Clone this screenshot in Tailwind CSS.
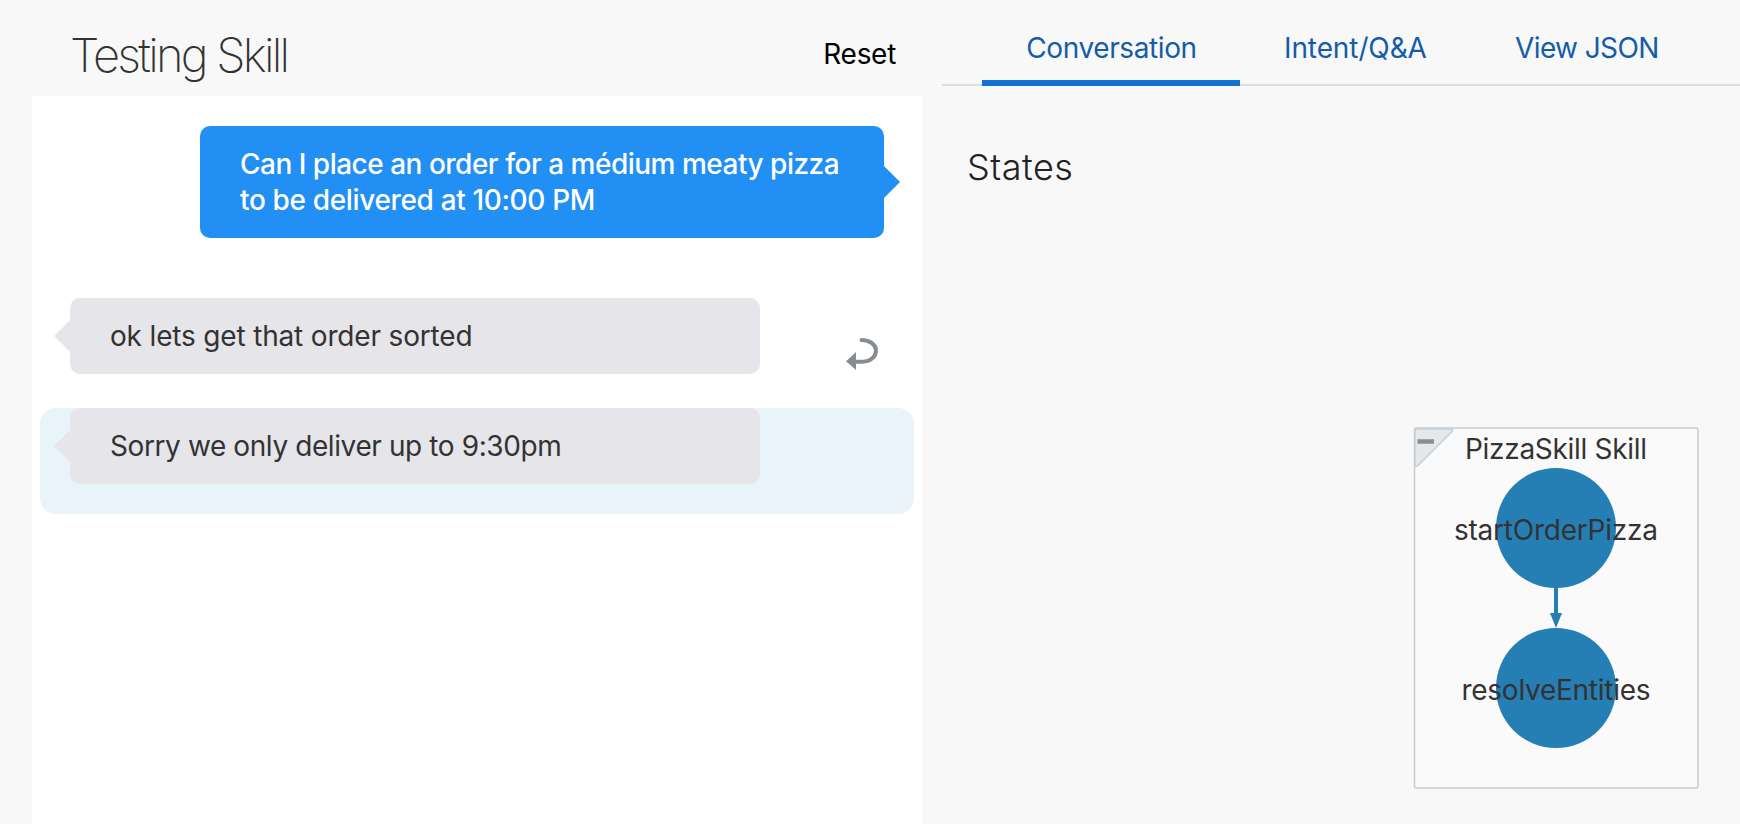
<!DOCTYPE html>
<html lang="en">
<head>
<meta charset="utf-8">
<title>Testing Skill</title>
<script src="https://cdn.jsdelivr.net/npm/@tailwindcss/browser@4"></script>
</head>
<body class="flex h-screen overflow-hidden bg-[#f8f8f8] pl-8 font-[Inter,'Liberation_Sans',sans-serif] text-[28px] leading-9 text-[#333]">
  <section class="flex w-[890px] shrink-0 flex-col">
    <header class="flex h-24 shrink-0 items-center justify-between pr-[26px] pl-[38px]">
      <h1 class="pt-3 text-[47px] leading-none font-extralight tracking-[-2.75px] whitespace-nowrap">Testing Skill</h1>
      <button class="pt-[11px] tracking-[-0.3px] text-black">Reset</button>
    </header>
    <main class="flex grow flex-col bg-white pt-[30px]">
      <div class="relative mr-[38px] ml-[168px] rounded-[10px] bg-[#218ff3] px-10 py-5 font-medium whitespace-nowrap text-white">
        <p class="tracking-[-0.5px]">Can I place an order for a médium meaty pizza</p>
        <p class="tracking-[-0.35px]">to be delivered at 10:00 PM</p>
        <svg class="absolute top-10 left-full h-8 w-4" viewBox="0 0 16 32"><path d="M0 0L16 16L0 32Z" fill="#218ff3"/></svg>
      </div>
      <div class="mx-2 mt-[60px] flex h-[110px] items-start pl-[30px]">
        <div class="relative w-[690px] rounded-[10px] bg-[#e5e5ea] px-10 py-5 tracking-[-0.17px] whitespace-nowrap">
          <p>ok lets get that order sorted</p>
          <svg class="absolute top-[22px] right-full h-8 w-4" viewBox="0 0 16 32"><path d="M16 0L0 16L16 32Z" fill="#e5e5ea"/></svg>
        </div>
        <svg class="mt-10 ml-[86px] h-8 w-8" viewBox="0 0 32 32"><path d="M15.500 2C24 2 30 7 30 12.500C30 18.500 25 23.700 16 23.700H9" fill="none" stroke="#878c90" stroke-width="4" stroke-linecap="round"/><path d="M0 23.200L10 14V32Z" fill="#878c90"/></svg>
      </div>
      <div class="mx-2 flex h-[106px] items-start rounded-2xl bg-[#e8f3fa] pl-[30px]">
        <div class="relative w-[690px] rounded-[10px] bg-[#e5e5ea] px-10 py-5 tracking-[-0.4px] whitespace-nowrap">
          <p>Sorry we only deliver up to 9:30pm</p>
          <svg class="absolute top-[22px] right-full h-8 w-4" viewBox="0 0 16 32"><path d="M16 0L0 16L16 32Z" fill="#e5e5ea"/></svg>
        </div>
      </div>
    </main>
  </section>
  <section class="ml-5 flex grow flex-col">
    <nav class="flex h-[86px] shrink-0 border-b-2 border-[#d6dfe6] pl-10 whitespace-nowrap text-[#145ca8]">
      <a class="-mb-0.5 flex w-[258px] justify-center border-b-6 border-[#1371d0] pt-[30px] pl-px tracking-[-0.4px]">Conversation</a>
      <a class="w-[231px] pt-[30px] pl-[44px] tracking-[-0.1px]">Intent/Q&amp;A</a>
      <a class="pt-[30px] pl-[44px] tracking-[-0.6px]">View JSON</a>
    </nav>
    <h2 class="mt-[59px] pl-[25px] text-[36px] leading-[44px] font-light tracking-[0.5px] text-[#222]">States</h2>
    <svg class="mt-[237px] ml-[470px] h-[364px] w-[288px]" viewBox="1412 426 288 364">
      <rect x="1414.500" y="428" width="283.500" height="360" rx="2" fill="#fafafa" stroke="#c5cbd0" stroke-width="1.500"/>
      <path d="M1415 429H1452.500V431L1417.500 466H1415Z" fill="#e4e8eb" stroke="#c5d0d7" stroke-width="1.500" stroke-linejoin="round"/>
      <path d="M1417.500 441.500H1434" stroke="#8a8e91" stroke-width="4.500"/>
      <circle cx="1556" cy="528" r="60" fill="#257eb4"/>
      <circle cx="1556" cy="688" r="60" fill="#257eb4"/>
      <path d="M1554 586H1558V613H1562L1556 628L1550 613H1554Z" fill="#257eb4"/>
      <g font-size="28" fill="#333">
        <text x="1465" y="459" textLength="182">PizzaSkill Skill</text>
        <text x="1454" y="539.500" textLength="204">startOrderPizza</text>
        <text x="1461.500" y="700" textLength="189">resolveEntities</text>
      </g>
    </svg>
  </section>
</body>
</html>
